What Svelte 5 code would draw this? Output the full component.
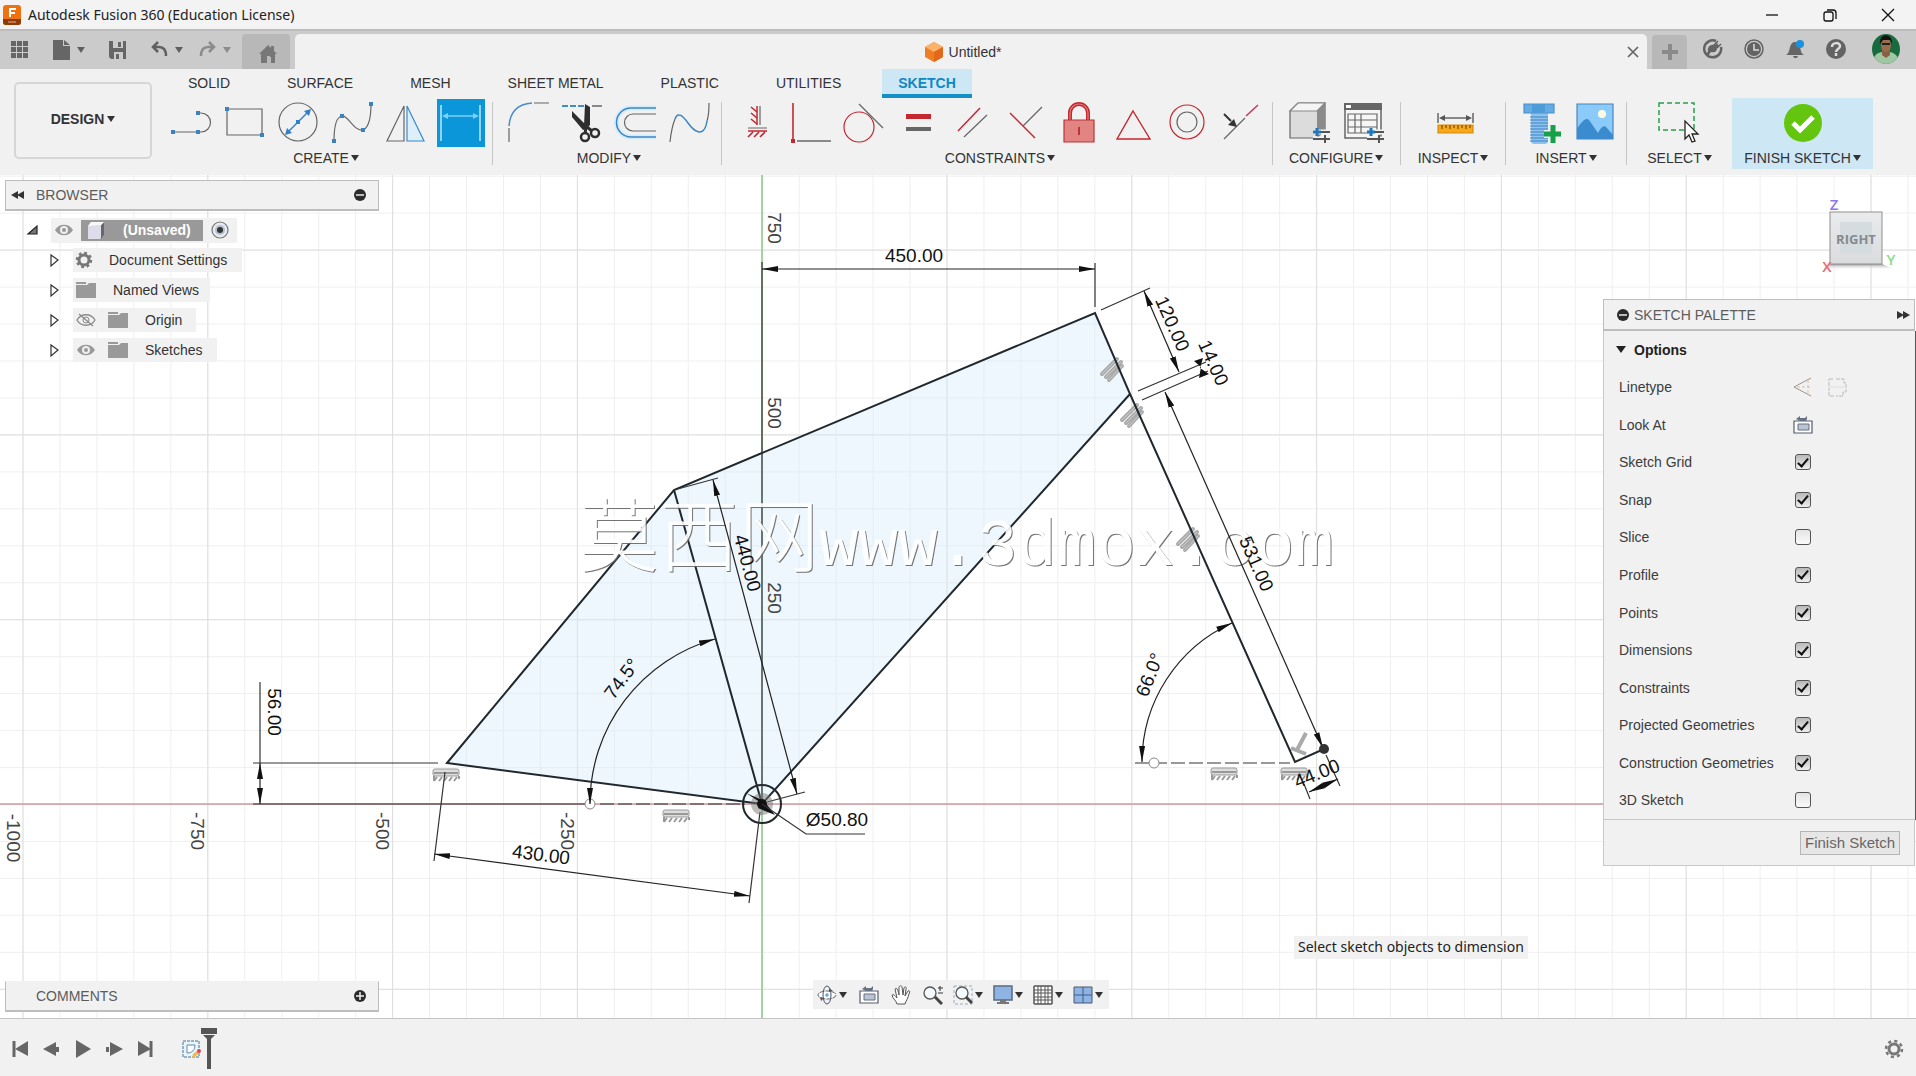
<script>
  const tabs = ['SOLID', 'SURFACE', 'MESH', 'SHEET METAL', 'PLASTIC', 'UTILITIES', 'SKETCH'];
  const groups = [
    { name: 'CREATE', cls: 'first', tools: ['line', 'rect', 'circle', 'spline', 'mirror', 'dimension'] },
    { name: 'MODIFY', cls: '', tools: ['fillet', 'trim', 'offset', 'curve'] },
    { name: 'CONSTRAINTS', cls: 'tight', tools: ['horizontal', 'coincident', 'tangent', 'equal', 'parallel', 'perpendicular', 'lock', 'midpoint', 'concentric', 'collinear'] },
    { name: 'CONFIGURE', cls: 'wide', tools: ['configure', 'table'] },
    { name: 'INSPECT', cls: 'inspect', tools: ['measure'] },
    { name: 'INSERT', cls: 'insert', tools: ['bolt', 'image'] },
    { name: 'SELECT', cls: 'select', tools: ['select'] }
  ];
  const tree = [
    { label: 'Document Settings', icon: 'gear', eye: '' },
    { label: 'Named Views', icon: 'folder', eye: '' },
    { label: 'Origin', icon: 'folder', eye: 'eyeoff' },
    { label: 'Sketches', icon: 'folder', eye: 'eye' }
  ];
  let options = $state([
    { label: 'Sketch Grid', on: true },
    { label: 'Snap', on: true },
    { label: 'Slice', on: false },
    { label: 'Profile', on: true },
    { label: 'Points', on: true },
    { label: 'Dimensions', on: true },
    { label: 'Constraints', on: true },
    { label: 'Projected Geometries', on: true },
    { label: 'Construction Geometries', on: true },
    { label: '3D Sketch', on: false }
  ]);
  const nav = [
    { name: 'Orbit', icon: 'orbit', drop: true },
    { name: 'Look at', icon: 'lookat', drop: false },
    { name: 'Pan', icon: 'hand', drop: false },
    { name: 'Zoom', icon: 'zoom', drop: false },
    { name: 'Fit', icon: 'fit', drop: true },
    { name: 'Display settings', icon: 'display', drop: true },
    { name: 'Grid and snaps', icon: 'grid', drop: true },
    { name: 'Viewports', icon: 'views', drop: true }
  ];
  const axisLabels = [
    [773, 228, '750'], [773, 413, '500'], [773, 598, '250'],
    [12, 838, '-1000'], [196, 831, '-750'], [381, 831, '-500'], [566, 831, '-250']
  ];
  const dims = [
    [914, 256, 0, '450.00'], [747, 563, 75, '440.00'], [622, 679, -53, '74.5°'],
    [274, 712, 90, '56.00'], [541, 855, 7, '430.00'], [837, 820, 0, 'Ø50.80'],
    [1172, 324, 66, '120.00'], [1213, 363, 66, '14.00'], [1256, 564, 66, '531.00'],
    [1150, 675, -68, '66.0°'], [1317, 774, -22, '44.00']
  ];
</script>

{#snippet tool(name)}
  <svg viewBox="0 0 48 48" width="48" height="48" fill="none" stroke="#666" stroke-width="1.2" aria-hidden="true">
    {#if name === 'line'}
      <path d="M6 33H31M31 14h3a9.500 9.500 0 0 1 0 19h-3" />
      <path d="M4 31h4v4H4zM29 31h4v4h-4zM29 12h4v4h-4z" fill="#3b82c0" stroke="none" />
    {:else if name === 'rect'}
      <path d="M6 10H41V36H6z" />
      <path d="M4 8h4v4H4zM39 34h4v4h-4z" fill="#3b82c0" stroke="none" />
    {:else if name === 'circle'}
      <circle cx="23" cy="23" r="19" />
      <path d="M14 32L32 14" stroke="#2f80c8" stroke-width="1.500" />
      <path d="M36 10l-2 7-5-5zM10 36l2-7 5 5zM21 21h4v4h-4z" fill="#2f80c8" stroke="none" />
    {:else if name === 'spline'}
      <path d="M5 42C5 28 7 18 13 17S24 32 34 31C41 28 42 16 42 5" />
      <path d="M3 40h4v4H3zM11 15h4v4h-4zM32 29h4v4h-4zM40 3h4v4h-4z" fill="#3b82c0" stroke="none" />
    {:else if name === 'mirror'}
      <path d="M21 7V42H4z" /><path d="M24 7V42H41z" stroke="#3b8ac4" fill="#dceffa" />
    {:else if name === 'dimension'}
      <path d="M4 6V42M43 6V42" stroke="#dcf1fc" stroke-width="1.300" />
      <path d="M7 17H40" stroke="#7fd0f5" stroke-width="1.500" />
      <path d="M5 17l6-3v6zM42 17l-6-3v6z" fill="#7fd0f5" stroke="none" />
    {:else if name === 'fillet'}
      <path d="M5 43V29M30 4H45" /><path d="M5 27C6 13 14 5 28 4" stroke="#4a8ccb" stroke-width="1.500" />
    {:else if name === 'trim'}
      <path d="M4 7H27" stroke="#3d8fc6" stroke-width="2" stroke-dasharray="6 2" /><path d="M34 7H44" stroke-width="1.500" />
      <path d="M27 5l5 3v18l-3 3-3-2zM14 12l13 13 1 5-3 1-11-13z" fill="#2e2e2e" stroke="none" />
      <circle cx="27" cy="38" r="4" stroke="#2e2e2e" stroke-width="2.500" /><circle cx="37" cy="34" r="4" stroke="#2e2e2e" stroke-width="2.500" />
      <path d="M28 28l-1 7M29 28l5 4" stroke="#2e2e2e" stroke-width="3" />
    {:else if name === 'offset'}
      <path d="M44 9H19a14.500 14.500 0 0 0 0 29H44" stroke="#d5ecfa" stroke-width="5" />
      <path d="M44 9H19a14.500 14.500 0 0 0 0 29H44" stroke="#3d86c4" stroke-width="1.500" />
      <path d="M44 15H21a8.500 8.500 0 0 0 0 17H44" />
    {:else if name === 'curve'}
      <path d="M4 43C5 33 7 25 9 20M41 22C43 16 43 10 43 4" />
      <path d="M9 20C12 12 17 17 22 24S38 41 41 22" stroke="#3d86c4" stroke-width="1.500" />
    {:else if name === 'horizontal'}
      <path d="M24 7V26" stroke="#c3272f" stroke-width="1.500" /><path d="M27 7V26M15 29H34" />
      <path d="M15 32H34M18 8l6 5M18 14l6 5M18 20l6 5M20 33l-5 5M26 33l-5 5M32 33l-5 5" stroke="#c3272f" stroke-width="1.600" />
    {:else if name === 'coincident'}
      <path d="M6 4V40" stroke="#c3272f" stroke-width="1.600" /><path d="M10 42H44" stroke-width="1.500" /><path d="M4 40h4v4H4z" fill="#c3272f" stroke="none" />
    {:else if name === 'tangent'}
      <circle cx="18" cy="28" r="15" stroke="#c3272f" /><path d="M18 5L42 29" />
    {:else if name === 'equal'}
      <path d="M11 15h25v5H11z" fill="#c3272f" stroke="none" /><path d="M11 28h25v4H11z" fill="#666" stroke="none" />
    {:else if name === 'parallel'}
      <path d="M9 32L31 9" stroke="#c3272f" stroke-width="1.500" /><path d="M15 38L38 16" />
    {:else if name === 'perpendicular'}
      <path d="M7 14L32 39" stroke="#c3272f" stroke-width="1.500" /><path d="M20 27L39 8" />
    {:else if name === 'lock'}
      <path d="M13 21V14a9 9 0 0 1 18 0v7" stroke="#c3272f" stroke-width="4" /><path d="M13 21V14a9 9 0 0 1 18 0v7" stroke="#e58080" />
      <path d="M7 21h30v22H7z" fill="#e28482" stroke="#b8353a" /><path d="M22 28v8" stroke="#b8353a" stroke-width="2" />
    {:else if name === 'midpoint'}
      <path d="M22 12L39 40H6z" stroke="#c3272f" stroke-width="1.400" />
    {:else if name === 'concentric'}
      <circle cx="22" cy="23" r="17" stroke="#c3272f" /><circle cx="22" cy="23" r="10" />
    {:else if name === 'collinear'}
      <path d="M5 40L26 19" /><path d="M27 17L39 6" stroke="#c4375a" stroke-width="1.500" />
      <path d="M5 15l7 7" stroke="#333" stroke-width="2" /><path d="M18 28l-9-2 6-6z" fill="#333" stroke="none" />
    {:else if name === 'configure'}
      <path d="M5 12L13 4H40V31L32 39H5z" fill="#dcdcdc" /><path d="M32 12L40 4V31L32 39z" fill="#8b8b8b" stroke="none" /><path d="M5 12L13 4H40L32 12z" fill="#f4f4f4" stroke="#888" />
      <path d="M28 33H45M28 40H45" stroke="#f1f1f1" stroke-width="5" />
      <path d="M36 33H45M28 40H45M40 36v8" stroke="#555" stroke-width="2" /><path d="M28 33h8M32 29v8" stroke="#2378bb" stroke-width="3" />
    {:else if name === 'table'}
      <path d="M6 5H42V39H6z" fill="#f6f6f6" stroke-width="1.500" /><path d="M5 4h38v7H5z" fill="#666" stroke="none" /><path d="M7 6h5v3H7z" fill="#fff" stroke="none" />
      <path d="M9 15H38V34H9zM9 21H38M9 28H38M16 15V34M22 15V34" />
      <path d="M28 33H45M28 40H45" stroke="#f1f1f1" stroke-width="5" />
      <path d="M36 33H45M28 40H45M40 36v8" stroke="#555" stroke-width="2" /><path d="M28 33h8M32 29v8" stroke="#2378bb" stroke-width="3" />
    {:else if name === 'measure'}
      <path d="M9 26h35v8H9z" fill="#f6a81c" stroke="#d98c10" /><path d="M13 26v4M17 26v3M21 26v4M25 26v3M29 26v4M33 26v3M37 26v4M41 26v3" stroke="#7a4d00" />
      <path d="M9 14V24M44 14V24M12 19H41" stroke-width="1.500" /><path d="M10 19l6-3v6zM43 19l-6-3v6z" fill="#555" stroke="none" />
    {:else if name === 'bolt'}
      <path d="M16 14h17v29l-2 2H18l-2-2z" fill="#8ec3ef" stroke="none" />
      <path d="M15 18h18M15 21h18M15 24h18M15 27h18M15 30h18M15 33h18M15 36h18M15 39h18M15 42h18" stroke="#3d82bf" />
      <path d="M9 5h30v9H9z" fill="#64abe4" stroke="#4a90cf" /><path d="M17 5h13v9H17z" fill="#4f9bd9" stroke="none" />
      <path d="M29 35h18M38 26v18" stroke="#f1f1f1" stroke-width="8" /><path d="M29 35h17M38 26v18" stroke="#17a04a" stroke-width="5" />
    {:else if name === 'image'}
      <path d="M8 5h36v35H8z" fill="#8bcbfa" stroke="#4b86b8" /><circle cx="33" cy="15" r="4" fill="#fffbe3" stroke="none" />
      <path d="M8 30c5-8 9-12 12-9l9 13c3-6 6-9 9-5l6 7v4H8z" fill="#3b8cce" stroke="none" />
    {:else if name === 'select'}
      <path d="M3 4H38V31H3z" stroke="#25a04c" stroke-width="1.500" stroke-dasharray="5 3" />
      <path d="M29 22v18l4-4 3 7 3-1-3-7h6z" fill="#fff" stroke="#222" stroke-width="1.300" />
    {:else if name === 'finish'}
      <circle cx="24" cy="24" r="19" fill="#63c50e" stroke="none" /><path d="M14 24l7 7 13-13" stroke="#fff" stroke-width="5" />
    {/if}
  </svg>
{/snippet}

{#snippet mini(name)}
  <svg viewBox="0 0 20 20" width="20" height="20" fill="none" stroke="#555" aria-hidden="true">
    {#if name === 'apps'}
      <path d="M1 1h5v5H1zM7 1h5v5H7zM13 1h5v5h-5zM1 7h5v5H1zM7 7h5v5H7zM13 7h5v5h-5zM1 13h5v5H1zM7 13h5v5H7zM13 13h5v5h-5z" fill="#666" stroke="none" />
    {:else if name === 'file'}
      <path d="M1 0h10v6h7v14H1zM12 0l6 5h-6z" fill="#666" stroke="none" />
    {:else if name === 'save'}
      <path d="M1 1h17v18H3l-2-2z" fill="#666" stroke="none" /><path d="M5 1h10v7H5zM6 12h9v7H6z" fill="#ccc" stroke="none" /><path d="M10 2h3v5h-3zM8 14h3v5H8z" fill="#666" stroke="none" />
    {:else if name === 'undo'}
      <path d="M8 2L3 7l5 5M3 7h6c5 0 7 4 7 9" stroke="#606060" stroke-width="2.500" />
    {:else if name === 'redo'}
      <path d="M11 2l5 5-5 5M16 7h-6c-5 0-7 4-7 9" stroke="#8c8c8c" stroke-width="2.500" />
    {:else if name === 'home'}
      <path d="M10 1l3 3V2h3v5l3 3h-2v9h-4v-6H9v6H3v-9H1z" fill="#777" stroke="none" /><path d="M9 12h3v7H9z" fill="#b8b8b8" stroke="none" />
    {:else if name === 'plus'}
      <path d="M2 10h16M10 2v16" stroke="#8a8a8a" stroke-width="4" />
    {:else if name === 'ext'}
      <path d="M13 2a8.500 8.500 0 1 0 5 6" stroke="#636363" stroke-width="2.500" /><path d="M5 13c-1-5 2-8 7-7l2-2 2 3-2 2c0 4-3 5-6 4l-3 4-3-2z" fill="#636363" stroke="none" /><path d="M11 6l4-4M14 9l4-4" stroke="#636363" stroke-width="1.500" />
    {:else if name === 'clock'}
      <circle cx="10" cy="10" r="9" stroke="#636363" stroke-width="1.500" /><circle cx="10" cy="10" r="7" fill="#636363" stroke="none" /><path d="M10 5v6h5" stroke="#ddd" stroke-width="1.500" />
    {:else if name === 'bell'}
      <path d="M1 16c3-2 3-4 4-8 1-3 2-5 5-5s4 2 5 5c1 4 1 6 4 8zM8 17h5c-1 3-4 3-5 0z" fill="#666" stroke="none" /><circle cx="15" cy="5" r="4" fill="#1a91dc" stroke="none" />
    {:else if name === 'help'}
      <circle cx="10" cy="10" r="10" fill="#636363" stroke="none" /><path d="M6 8c0-5 8-5 8-1 0 3-4 3-4 6M10 14v3" stroke="#ddd" stroke-width="2.500" />
    {:else if name === 'eye'}
      <path d="M1 10c4-7 14-7 18 0-4 7-14 7-18 0z" fill="#999" stroke="none" /><circle cx="10" cy="10" r="4" fill="#eee" stroke="none" /><circle cx="10" cy="10" r="2" fill="#999" stroke="none" />
    {:else if name === 'eyeoff'}
      <path d="M1 10c4-7 14-7 18 0-4 7-14 7-18 0zM3 4l14 12" stroke="#8a8a8a" stroke-width="1.300" /><circle cx="10" cy="10" r="3" stroke="#8a8a8a" />
    {:else if name === 'folder'}
      <path d="M0 2h10v2H0zM0 5h11l2-2h7v15H0z" fill="#999" stroke="none" />
    {:else if name === 'gear'}
      <circle cx="10" cy="10" r="5" stroke="#777" stroke-width="3" /><circle cx="10" cy="10" r="7" stroke="#777" stroke-width="2.500" stroke-dasharray="2.750 2.750" />
    {:else if name === 'cube'}
      <path d="M2 6l3-4h13v13l-4 4H2z" fill="#dcdcea" stroke="none" /><path d="M15 5l3-3v13l-3 4z" fill="#66666f" stroke="none" /><path d="M2 6l3-4h13l-3 3z" fill="#f7f7fb" stroke="none" />
    {:else if name === 'construction'}
      <path d="M18 1L1 10l17 9" stroke="#9c948c" /><path d="M4 10h15M15 3v14" stroke="#d9bfae" stroke-dasharray="3 2" />
    {:else if name === 'centerline'}
      <path d="M2 2h5M9 2h8v4h2v9h-3v4H9M7 19H2V11M2 9V2" stroke="#bbb" stroke-dasharray="4 1" /><path d="M1 10h18" stroke="#ddd" />
    {:else if name === 'lookat'}
      <path d="M1 6H19V18H1z" fill="#fff" stroke="#555e6b" stroke-width="1.200" /><path d="M5 9h11v6H5z" fill="#b9c4d6" stroke="#666f7d" /><path d="M3 4l4-3v2h5l2-2v3l-1 2H7z" fill="#667284" stroke="none" />
    {:else if name === 'orbit'}
      <ellipse cx="10" cy="10" rx="9" ry="4" fill="#fff" stroke="#666" stroke-dasharray="5 1" /><ellipse cx="10" cy="10" rx="4" ry="9" stroke="#47546a" /><path d="M10 8v4M8 10h4" stroke="#3d8bd0" /><path d="M12 3l4 3-4 1zM3 12l4 1-3 3z" fill="#555" stroke="none" />
    {:else if name === 'hand'}
      <path d="M6 19c-1-4-5-6-5-9 2-1 3 1 5 3L4 4c2-2 3 1 4 6L8 2c1-2 3-1 3 0l1 8 1-7c1-2 3-1 2 1l-1 7 3-5c2-1 2 1 1 3-1 4-3 7-4 10z" fill="#fff" stroke="#555" />
    {:else if name === 'zoom'}
      <circle cx="7" cy="8" r="6" fill="#f4fafd" stroke="#555" stroke-width="1.300" /><path d="M12 12l7 7" stroke="#444" stroke-width="3" /><path d="M15 3h5M17 1v5M15 8h5" stroke="#333" />
    {:else if name === 'fit'}
      <path d="M1 1h18v18H1z" stroke="#9aabbb" stroke-dasharray="3 2" /><circle cx="9" cy="8" r="6" fill="#f4fafd" stroke="#555" stroke-width="1.300" /><path d="M13 12l6 6" stroke="#444" stroke-width="3" />
    {:else if name === 'display'}
      <path d="M1 1h18v14H1z" fill="#8fb3e3" stroke="#5a6b84" stroke-width="1.500" /><path d="M7 15h6v2h3v2H4v-2h3z" fill="#777" stroke="none" />
    {:else if name === 'grid'}
      <path d="M1 1h18v18H1z" fill="#fff" /><path d="M1 1h18v18H1zM1 5h18M1 8h18M1 12h18M1 15h18M5 1v18M8 1v18M12 1v18M15 1v18" stroke="#555" />
    {:else if name === 'views'}
      <path d="M1 2h18v16H1z" fill="#8fb3e3" stroke="#47586f" /><path d="M10 2v16M1 10h18" stroke="#3f5f8c" />
    {:else if name === 'tostart'}
      <path d="M3 2v16" stroke="#666" stroke-width="3" /><path d="M17 2v15L4 10z" fill="#666" stroke="none" />
    {:else if name === 'back'}
      <path d="M14 3v14L1 10zM14 8h3v5h-3z" fill="#666" stroke="none" />
    {:else if name === 'play'}
      <path d="M3 1v18l15-9z" fill="#666" stroke="none" />
    {:else if name === 'forward'}
      <path d="M6 3v14l13-7zM2 8h3v5H2z" fill="#666" stroke="none" />
    {:else if name === 'toend'}
      <path d="M16 2v16" stroke="#666" stroke-width="3" /><path d="M3 2v15l13-7z" fill="#666" stroke="none" />
    {:else if name === 'sketch'}
      <path d="M2 2h16v16H2z" fill="#eaf5fb" stroke="#456f91" stroke-dasharray="3 1" /><path d="M6 14V6h8c0 5-3 8-8 8z" fill="#fff" stroke="#5b87ac" />
      <path d="M11 19l1-4 5-4 2 2-5 5z" fill="#f4b942" stroke="none" /><circle cx="18" cy="12" r="2" fill="#e0405f" stroke="none" />
    {:else if name === 'cog'}
      <circle cx="10" cy="10" r="5" stroke="#777" stroke-width="3" /><circle cx="10" cy="10" r="8" stroke="#777" stroke-width="2.500" stroke-dasharray="3.140 3.140" />
    {:else if name === 'minus'}
      <circle cx="10" cy="10" r="6" fill="#2b2b2b" stroke="none" /><path d="M6 10h8" stroke="#eee" stroke-width="1.500" />
    {:else if name === 'add'}
      <circle cx="10" cy="10" r="6" fill="#2b2b2b" stroke="none" /><path d="M6 10h8M10 6v8" stroke="#eee" stroke-width="1.500" />
    {:else if name === 'rewind'}
      <path d="M10 6v8l-7-4zM16 6v8l-7-4z" fill="#333" stroke="none" />
    {:else if name === 'fast'}
      <path d="M4 6v8l7-4zM10 6v8l7-4z" fill="#333" stroke="none" />
    {:else if name === 'close'}
      <path d="M5 5l10 10M15 5L5 15" stroke="#666" stroke-width="1.700" />
    {:else if name === 'wmin'}
      <path d="M4 10h12" stroke="#111" stroke-width="1.300" />
    {:else if name === 'wmax'}
      <rect x="4" y="7" width="9" height="9" rx="2" stroke="#111" stroke-width="1.300" /><path d="M7 5h6c2 0 3 1 3 3v6" stroke="#111" stroke-width="1.300" />
    {:else if name === 'wclose'}
      <path d="M4 4l12 12M16 4L4 16" stroke="#111" stroke-width="1.300" />
    {:else if name === 'closed'}
      <path d="M7 5v11l7-6z" fill="#fff" stroke="#333" stroke-width="1.200" />
    {:else if name === 'open'}
      <path d="M15 6v8H6z" fill="#777" stroke="#222" stroke-width="1.200" />
    {:else if name === 'radio'}
      <circle cx="10" cy="10" r="8" fill="#e6ebf2" stroke="#777" stroke-width="1.200" /><circle cx="10" cy="10" r="5" fill="#b5bfce" stroke="none" /><circle cx="10" cy="10" r="3" fill="#333" stroke="none" />
    {/if}
  </svg>
{/snippet}

<div class="app">
  <header class="titlebar">
    <svg class="logo" viewBox="0 0 18 20" width="18" height="20" aria-hidden="true">
      <rect width="18" height="20" rx="3" fill="#f0710f" /><path d="M0 14h18v3a3 3 0 0 1-3 3H3a3 3 0 0 1-3-3z" fill="#8f3b08" />
      <path d="M7 12V4h6M7 8h5" stroke="#fff" stroke-width="2" fill="none" /><path d="M5 17h8" stroke="#e9b48f" />
    </svg>
    <h1>Autodesk Fusion 360 (Education License)</h1>
    <div class="winbtns">
      <button aria-label="Minimize">{@render mini('wmin')}</button>
      <button aria-label="Restore">{@render mini('wmax')}</button>
      <button aria-label="Close">{@render mini('wclose')}</button>
    </div>
  </header>

  <div class="strip">
    <div class="quick">
      <button aria-label="Data panel">{@render mini('apps')}</button>
      <button class="file" aria-label="File">{@render mini('file')}<i class="caret"></i></button>
      <button class="save" aria-label="Save">{@render mini('save')}</button>
      <button aria-label="Undo">{@render mini('undo')}<i class="caret"></i></button>
      <button class="redo" aria-label="Redo">{@render mini('redo')}<i class="caret"></i></button>
    </div>
    <button class="home" aria-label="Home">{@render mini('home')}</button>
    <div class="doctab">
      <span class="docname">
        <svg viewBox="0 0 18 20" width="18" height="20" aria-hidden="true"><path d="M9 0l9 5v10l-9 5-9-5V5z" fill="#ef7d22" /><path d="M9 0l9 5-9 5-9-5z" fill="#fbb269" /><path d="M9 10l9-5v10l-9 5z" fill="#e2681a" /></svg>
        Untitled*
      </span>
      <button aria-label="Close document">{@render mini('close')}</button>
    </div>
    <button class="newtab" aria-label="New document">{@render mini('plus')}</button>
    <div class="account">
      <button aria-label="Extensions">{@render mini('ext')}</button>
      <button aria-label="Job status">{@render mini('clock')}</button>
      <button aria-label="Notifications">{@render mini('bell')}</button>
      <button aria-label="Help">{@render mini('help')}</button>
      <button class="avatar" aria-label="Profile">
        <svg viewBox="0 0 28 30" width="28" height="30" aria-hidden="true">
          <defs><clipPath id="av"><ellipse cx="14" cy="15" rx="14" ry="15" /></clipPath></defs>
          <g clip-path="url(#av)"><path d="M0 0h28v30H0z" fill="#176b3e" /><path d="M1 30c0-9 4-11 9-12h8c5 1 9 4 9 12z" fill="#9fc7a2" /><path d="M10 15h8v6l-4 3-4-3z" fill="#8a5f43" /><ellipse cx="14" cy="11" rx="5" ry="7" fill="#9b6d4d" /><path d="M8 10c-1-12 13-11 12 0l-2-4h-7z" fill="#131313" /><path d="M10 10h8" stroke="#222" stroke-width="2" /></g>
        </svg>
      </button>
    </div>
  </div>

  <div class="ribbon">
    <button class="workspace">DESIGN<i class="caret"></i></button>
    <div class="main">
      <nav class="tabs">
        {#each tabs as t}<button class:active={t === 'SKETCH'}>{t}</button>{/each}
      </nav>
      <div class="tools">
        {#each groups as g}
          <section class="group {g.cls}">
            <div class="icons">
              {#each g.tools as t}<button class:pressed={t === 'dimension'} aria-label={t}>{@render tool(t)}</button>{/each}
            </div>
            <button class="label">{g.name}<i class="caret"></i></button>
          </section>
          {#if g.name !== 'SELECT'}<div class="sep"></div>{/if}
        {/each}
        <section class="group finish">
          <div class="icons"><button aria-label="Finish">{@render tool('finish')}</button></div>
          <button class="label">FINISH SKETCH<i class="caret"></i></button>
        </section>
      </div>
    </div>
  </div>

  <main class="stage">
    <svg class="canvas" width="100%" height="100%" aria-label="Sketch canvas">
      <defs>
        <pattern id="minor" width="36.960" height="36.960" patternUnits="userSpaceOnUse" x="761.700" y="804">
          <path d="M0 0H37M0 0V37" stroke="#efefef" stroke-width="2" fill="none" />
        </pattern>
        <pattern id="major" width="184.800" height="184.800" patternUnits="userSpaceOnUse" x="761.700" y="804">
          <path d="M0 0H185M0 0V185" stroke="#dedede" stroke-width="2" fill="none" />
        </pattern>
        <marker id="arrow" viewBox="0 0 16 8" refX="16" refY="4" markerWidth="16" markerHeight="8" markerUnits="userSpaceOnUse" orient="auto-start-reverse"><path d="M0 1L16 4L0 7z" fill="#111" /></marker>
        <g id="flat"><rect x="-13" y="-6" width="26" height="7" rx="2" fill="#ddd" stroke="#999" /><path d="M-12 -2H12M-12 1v5M-9 2l-3 4M-4 2l-3 4M1 2l-3 4M6 2l-3 4M11 2l-3 4M13 1v3" stroke="#999" stroke-width="2" /></g>
        <g id="slant" stroke="#aaa" stroke-width="4" stroke-linecap="round"><path d="M-10 5L5 -10M-6 8L9 -7M-3 11L10 -3" /><path d="M-10 5L5 -10M-6 8L9 -7M-3 11L10 -3" stroke="#ccc" stroke-width="1" /></g>
      </defs>
      <g transform="translate(0 -175)">
        <rect y="175" width="100%" height="100%" fill="url(#minor)" />
        <rect y="175" width="100%" height="100%" fill="url(#major)" />
        <path d="M0 804H4000" stroke="#d29a9f" stroke-width="1.300" />
        <path d="M762 175V3000" stroke="#7cc47c" stroke-width="1.300" />
        <path class="profile" d="M447 763L674 490L1095 313L1130 394L762 804z" />

        {#each axisLabels as [x, y, s]}
          <text class="axis" transform="translate({x} {y}) rotate(90)" dy="5">{s}</text>
        {/each}

        <use href="#flat" x="446" y="775" /><use href="#flat" x="676" y="816" /><use href="#flat" x="1224" y="774" /><use href="#flat" x="1294" y="774" />
        <use href="#slant" x="1112" y="369" /><use href="#slant" x="1132" y="415" /><use href="#slant" x="1188" y="539" />
        <path d="M1306 733L1297 750M1291 748L1306 754" stroke="#aaa" stroke-width="4" />

        <path class="edge" d="M447 763L674 490L1095 313L1130 394L762 804zM674 490L762 804M1130 394L1295 762L1324 749" />
        <circle class="edge" cx="762" cy="804" r="19" />
        <path class="thin" d="M762 262V804M253 804H586M253 763H438M1095 263V307" />
        <path class="thin" d="M600 804H745M1135 763H1290" stroke-dasharray="14 4" />
        <circle cx="590" cy="804" r="5" fill="#fff" stroke="#888" /><circle cx="1154" cy="763" r="5" fill="#fff" stroke="#888" />

        <g class="mark"><text class="cjk" x="579" y="565">莫西网</text><text class="latin" x="819" y="565">www.3dmox.com</text></g>

        <path class="dim" d="M762 269H1095" />
        <path class="dim" d="M713 480L797 794" /><path class="thin" d="M674 490L718 478M767 802L805 792" />
        <path class="dim" d="M590 804A171 171 0 0 1 715 639" />
        <path class="dim" d="M260 804V763" /><path class="thin" d="M260 682V763" />
        <path class="dim" d="M434 854L750 896" /><path class="thin" d="M445 772L434 861M760 812L749 903" />
        <circle cx="762" cy="804" r="11" fill="#777" opacity=".5" /><circle cx="762" cy="804" r="5" fill="#111" />
        <path d="M746 793L762 800L766 806zM775 815L758 808L764 801z" fill="#111" /><path class="thin" d="M762 804L806 834H865" />
        <path class="dim" d="M1144 291L1179 372" /><path class="thin" d="M1101 310L1150 288M1138 391L1206 362M1142 400L1208 371" />
        <path d="M1194 361L1203 358L1200 368L1209 374L1199 378L1201 367z" fill="#111" />
        <path class="dim" d="M1165 392L1323 748" />
        <path class="dim" d="M1142 762A153 153 0 0 1 1232 623" />
        <path class="dim" d="M1309 792L1338 779" /><path class="thin" d="M1304 784L1310 799M1326 755L1340 786" />
        <circle cx="1324" cy="749" r="5" fill="#333" />

        {#each dims as [x, y, r, s]}
          <text class="dimtext" transform="translate({x} {y}) rotate({r})" dy="6">{s}</text>
        {/each}
      </g>
    </svg>

    <aside class="browser">
      <div class="panelhead">
        <button aria-label="Collapse">{@render mini('rewind')}</button><h2>BROWSER</h2><button class="end" aria-label="Hide browser">{@render mini('minus')}</button>
      </div>
      <ul>
        <li class="root">
          <button aria-label="Toggle document">{@render mini('open')}</button>
          <div class="chip">{@render mini('eye')}<span class="doc">{@render mini('cube')}<b>(Unsaved)</b></span>{@render mini('radio')}</div>
        </li>
        {#each tree as n}
          <li>
            <button aria-label="Expand {n.label}">{@render mini('closed')}</button>
            <div class="chip" class:settings={n.icon === 'gear'} class:nested={n.eye}>{#if n.eye}{@render mini(n.eye)}{/if}{@render mini(n.icon)}<span>{n.label}</span></div>
          </li>
        {/each}
      </ul>
    </aside>

    <div class="viewcube">
      <svg viewBox="0 0 80 92" width="80" height="92" aria-label="View cube">
        <defs><linearGradient id="face" x2="0" y2="1"><stop stop-color="#eaebec" /><stop offset="1" stop-color="#d9dbdd" /></linearGradient><linearGradient id="shade" x2="0" y2="1"><stop stop-color="#999" /><stop offset="1" stop-color="#fff" stop-opacity="0" /></linearGradient></defs>
        <path d="M10 73h53l14 6H2z" fill="url(#shade)" />
        <rect x="11" y="21" width="52" height="52" fill="url(#face)" stroke="#909090" /><rect x="21" y="31" width="32" height="32" fill="#d5dce0" />
        <text x="37" y="53" class="face">RIGHT</text>
        <text x="15" y="19" class="ax z">Z</text><text x="8" y="81" class="ax x">X</text><text x="72" y="74" class="ax y">Y</text>
      </svg>
    </div>

    <aside class="palette">
      <div class="panelhead">{@render mini('minus')}<h2>SKETCH PALETTE</h2><button class="end" aria-label="Dock palette">{@render mini('fast')}</button></div>
      <div class="rows">
        <div class="row title"><i class="caret"></i><h3>Options</h3></div>
        <div class="row"><span>Linetype</span><button aria-label="Construction">{@render mini('construction')}</button><button aria-label="Centerline">{@render mini('centerline')}</button></div>
        <div class="row"><span>Look At</span><button aria-label="Look At">{@render mini('lookat')}</button></div>
        {#each options as o}
          <label class="row"><span>{o.label}</span><input type="checkbox" bind:checked={o.on} /></label>
        {/each}
      </div>
      <div class="foot"><button>Finish Sketch</button></div>
    </aside>

    <div class="hint">Select sketch objects to dimension</div>

    <div class="comments panelhead"><h2>COMMENTS</h2><button class="end" aria-label="Show comments">{@render mini('add')}</button></div>

    <div class="navbar">
      {#each nav as n}<button class:plain={!n.drop} aria-label={n.name}>{@render mini(n.icon)}{#if n.drop}<i class="caret"></i>{/if}</button>{/each}
    </div>
  </main>

  <footer class="timeline">
    <button aria-label="Go to start">{@render mini('tostart')}</button>
    <button aria-label="Step back">{@render mini('back')}</button>
    <button aria-label="Play">{@render mini('play')}</button>
    <button aria-label="Step forward">{@render mini('forward')}</button>
    <button aria-label="Go to end">{@render mini('toend')}</button>
    <div class="features">
      <button aria-label="Sketch feature">{@render mini('sketch')}</button>
      <svg viewBox="0 0 16 42" width="16" height="42" aria-hidden="true"><path d="M0 0h16v6H0zM2 7h12l-4 4v30H6V11z" fill="#555" /></svg>
    </div>
    <button class="prefs" aria-label="Timeline settings">{@render mini('cog')}</button>
  </footer>
</div>

<style>
  :global(body) { margin: 0; }
  .app { min-height: 100vh; display: flex; flex-direction: column; background: #f1f1f1; font: 14px/16px "Liberation Sans", Arial, sans-serif; color: #333; overflow: hidden; }
  .app * { box-sizing: border-box; }
  button { border: 0; padding: 0; margin: 0; background: none; font: inherit; color: inherit; display: flex; align-items: center; justify-content: center; }
  svg { display: block; flex: none; }
  h1, h2, h3, ul { margin: 0; padding: 0; font: inherit; }
  .caret { width: 0; height: 0; flex: none; border: 4px solid transparent; border-top: 6px solid currentColor; border-bottom: 0; }

  .titlebar { height: 29px; display: flex; align-items: center; padding: 0 18px 0 3px; background: #f3f3f3; }
  h1 { font: 14px/20px "Noto Sans", sans-serif; color: #222; margin-left: 7px; }
  .winbtns { margin-left: auto; display: flex; gap: 38px; }
  .winbtns button { width: 20px; height: 20px; }

  .strip { height: 40px; display: flex; align-items: flex-end; background: #cbcbcb; border-top: 2px solid #bdbdbd; }
  .quick { display: flex; align-self: center; padding-left: 10px; width: 242px; color: #606060; }
  .quick .caret { margin-left: 5px; }
  .quick .file { margin-left: 22px; }
  .quick .save { margin: 0 22px 0 23px; }
  .quick .redo { margin-left: 15px; color: #8c8c8c; }
  .home { width: 48px; height: 35px; background: #b8b8b8; border-radius: 4px 4px 0 0; padding: 4px 0 0 3px; }
  .doctab { flex: 1; height: 35px; margin-left: 5px; background: #f1f1f1; border-radius: 5px 5px 0 0; display: flex; align-items: center; padding-right: 4px; }
  .docname { flex: 1; display: flex; justify-content: center; align-items: center; gap: 6px; padding-left: 8px; }
  .newtab { width: 35px; height: 34px; margin-left: 5px; background: #b8b8b8; border-radius: 4px 4px 0 0; }
  .account { align-self: center; display: flex; align-items: center; gap: 21px; padding: 0 16px 2px; }
  .avatar { margin-left: 5px; }

  .ribbon { display: flex; height: 106px; }
  .workspace { width: 138px; height: 77px; margin: 13px 15px 0 14px; padding-bottom: 3px; border: 2px solid #d6d6d6; border-radius: 5px; font-weight: bold; gap: 3px; }
  .main { flex: 1; min-width: 0; }
  .tabs { display: flex; gap: 25px; padding-left: 5px; height: 29px; }
  .tabs button { padding: 0 16px; border: solid transparent; border-width: 2px 0 4px; }
  .tabs .active { background: #cde7f5; border-bottom-color: #1490c8; color: #0f87c4; font-weight: bold; }
  .tools { display: flex; align-items: flex-start; }
  .group { display: flex; flex-direction: column; align-items: center; height: 71px; padding: 1px 7px 0 11px; flex: none; }
  .group.first { padding-left: 0; }
  .group.tight { padding-right: 5px; }
  .group.wide { padding: 1px 13px 0 12px; }
  .group.inspect { width: 104px; padding: 1px 0; }
  .group.insert { width: 120px; padding: 1px 0; }
  .group.select { width: 105px; padding: 1px 0; }
  .group.finish { width: 141px; padding: 1px 0; background: #cde7f5; }
  .sep { width: 1px; height: 63px; margin-top: 4px; background: #c6c6c6; }
  .icons { display: flex; gap: 6px; height: 48px; }
  .pressed { background: #0b96d9; }
  .label { margin-top: 3px; gap: 2px; white-space: nowrap; }

  .stage { position: relative; flex: 1; background: #fff; overflow: hidden; min-height: 720px; border-bottom: 1px solid #c4c4c4; }
  .canvas { position: absolute; inset: 0; }
  .profile { fill: #d5ebf9; fill-opacity: .4; }
  .edge { fill: none; stroke: #20272d; stroke-width: 2; }
  .thin { fill: none; stroke: #333; stroke-width: 1.2; }
  path.dim { fill: none; stroke: #222; stroke-width: 1.2; marker-start: url(#arrow); marker-end: url(#arrow); }
  .axis, .dimtext { font-size: 19px; text-anchor: middle; fill: #111; }
  .axis { fill: #444; }
  .mark { fill: #fff; filter: drop-shadow(1px 1px 0 #666); opacity: .9; }
  .cjk { font: 300 80px "Noto Sans CJK SC", sans-serif; }
  .latin { font: 66px "Liberation Mono", monospace; }

  .panelhead { display: flex; align-items: center; height: 31px; background: #f1f1f1; border: 1px solid #bdbdbd; border-bottom-width: 2px; color: #5c5c5c; }
  .panelhead .end { margin-left: auto; }
  .browser { position: absolute; left: 5px; top: 5px; width: 374px; }
  .browser .panelhead { padding: 0 8px 0 2px; }
  .browser h2 { margin-left: 8px; }
  ul { list-style: none; padding: 4px 0 0 39px; }
  li { display: flex; align-items: center; height: 30px; gap: 9px; }
  li.root { margin-left: -22px; gap: 9px; }
  .chip { display: flex; align-items: center; height: 24px; background: #f1f1f1; padding: 0 11px 0 3px; gap: 17px; }
  .settings { padding-right: 15px; gap: 15px; padding-left: 1px; }
  .chip.nested { gap: 12px; padding-right: 14px; }
  .nested span { margin-left: 5px; }
  .root .chip { gap: 7px; padding: 0 7px 0 3px; height: 25px; }
  .doc { display: flex; align-items: center; background: #999; height: 21px; width: 122px; padding-left: 5px; color: #fff; gap: 17px; }

  .viewcube { position: absolute; right: 17px; top: 16px; }
  .face { font: bold 13px "Open Sans", sans-serif; text-anchor: middle; fill: #858a8e; }
  .ax { font: 600 15px "Open Sans", sans-serif; text-anchor: middle; }
  .z { fill: #8b79ec; } .x { fill: #ea6a72; } .y { fill: #86dc86; }

  .palette { position: absolute; right: 1px; top: 124px; width: 312px; background: #f1f1f1; color: #3c3c3c; }
  .palette .panelhead { padding: 0 1px 0 9px; height: 32px; }
  .palette h2 { margin-left: 1px; }
  .rows { display: grid; grid-template-rows: repeat(13, 1fr); min-height: 489px; border-left: 1px solid #c8c8c8; box-shadow: 1px 0 0 #555; border-bottom: 1px solid #c8c8c8; }
  .row { display: grid; grid-template-columns: 174px 20px 20px; column-gap: 0; align-items: center; padding-left: 15px; }
  .row button + button { margin-left: 14px; width: 20px; }
  .row.title { display: flex; gap: 8px; font-weight: bold; color: #222; padding-left: 12px; }
  .title .caret { border-width: 7px 5px 0; }
  input { appearance: none; width: 16px; height: 16px; margin: 0 2px; border: 1px solid #555; border-radius: 3px; background: linear-gradient(#e4e4e4, #fafafa); display: grid; place-items: center; }
  input:checked { background: linear-gradient(#b9b9b9, #ededed); }
  input:checked::after { content: ""; width: 4px; height: 9px; border: solid #111; border-width: 0 2px 2px 0; transform: rotate(40deg); margin-bottom: 2px; }
  .foot { display: flex; justify-content: flex-end; padding: 11px 14px 10px; border: solid #c8c8c8; border-width: 0 1px 1px; }
  .foot button { width: 100px; height: 24px; border: 1px solid #b5b5b5; background: #e6e6e6; font-size: 15px; color: #666; }

  .hint { position: absolute; left: 1294px; top: 761px; height: 23px; padding: 0 4px; background: #f1f1f1; font: 14px/22px "Noto Sans", sans-serif; color: #222; }
  .comments { position: absolute; left: 5px; bottom: 6px; width: 374px; padding: 0 8px 0 30px; border-top-color: #f1f1f1; }
  .navbar { position: absolute; left: 50%; bottom: 9px; height: 29px; width: 296px; margin-left: -145px; padding: 0 6px 0 4px; background: #f1f1f1; display: flex; align-items: center; justify-content: space-between; }
  .navbar .caret { margin-left: 2px; color: #333; }
  .navbar .plain { margin-left: 2px; }

  .timeline { height: 57px; display: flex; align-items: center; padding: 3px 12px 0 11px; gap: 11px; }
  .features { display: flex; align-items: center; margin-left: 15px; }
  .prefs { margin-left: auto; }
</style>
